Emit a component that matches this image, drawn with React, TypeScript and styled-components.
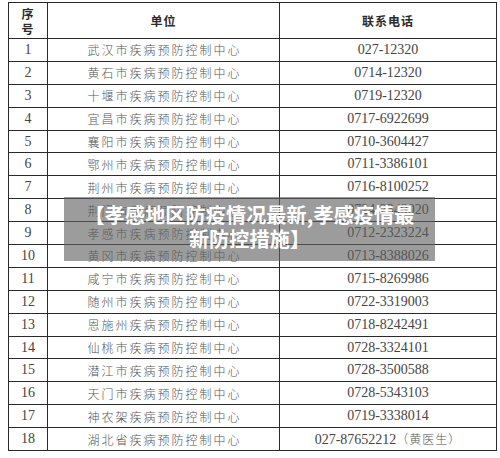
import React from "react";
import styled, { createGlobalStyle } from "styled-components";

const Global = createGlobalStyle`
  html, body { margin: 0; padding: 0; background: #fff; }
  body { width: 500px; height: 458px; overflow: hidden; }
`;

const Page = styled.div`
  position: relative;
  width: 500px;
  height: 458px;
  padding: 2px 0 0 8px;
  box-sizing: border-box;
`;

const Table = styled.table`
  border-collapse: collapse;
  width: 488px;
  table-layout: fixed;
  border: 1.5px solid #333;
`;

const HeadCell = styled.th`
  height: 35px;
  border: 1px solid #2a2a2a;
  font-family: "Noto Sans CJK SC", sans-serif;
  font-weight: 700;
  font-size: 12px;
  line-height: 15px;
  color: #2b2b2b;
  letter-spacing: 1px;
  text-align: center;
  padding: 0;
`;

const Row = styled.tr`
  height: 22.9px;
`;

const NumCell = styled.td`
  border: 1px solid #2a2a2a;
  font-family: "Liberation Serif", serif;
  font-size: 14px;
  color: #444;
  text-align: center;
  padding: 0;
`;

const UnitCell = styled.td`
  border: 1px solid #2a2a2a;
  font-family: "Noto Sans CJK SC", sans-serif;
  font-weight: 300;
  font-size: 12px;
  letter-spacing: 2px;
  color: #555;
  text-align: center;
  padding: 0 0 0 2px;
`;

const PhoneCell = styled.td`
  border: 1px solid #2a2a2a;
  font-family: "Liberation Serif", serif;
  font-size: 14px;
  color: #444;
  text-align: center;
  padding: 0;
`;

const Note = styled.span`
  font-family: "Noto Sans CJK SC", sans-serif;
  font-weight: 300;
  font-size: 12px;
  letter-spacing: 1px;
  color: #555;
`;

const Banner = styled.div`
  position: absolute;
  left: 64px;
  top: 197px;
  width: 371px;
  height: 64px;
  box-sizing: border-box;
  padding: 6px 8px;
  background: rgba(95, 95, 95, 0.62);
  color: #fff;
  font-family: "Noto Sans CJK SC", sans-serif;
  font-weight: 700;
  font-size: 20px;
  line-height: 24px;
  text-align: center;
  letter-spacing: 0.2px;
  white-space: nowrap;
`;

const rows: [string, string, string?][] = [
  ["武汉市疾病预防控制中心", "027-12320"],
  ["黄石市疾病预防控制中心", "0714-12320"],
  ["十堰市疾病预防控制中心", "0719-12320"],
  ["宜昌市疾病预防控制中心", "0717-6922699"],
  ["襄阳市疾病预防控制中心", "0710-3604427"],
  ["鄂州市疾病预防控制中心", "0711-3386101"],
  ["荆州市疾病预防控制中心", "0716-8100252"],
  ["荆门市疾病预防控制中心", "0724-2349020"],
  ["孝感市疾病预防控制中心", "0712-2323224"],
  ["黄冈市疾病预防控制中心", "0713-8388026"],
  ["咸宁市疾病预防控制中心", "0715-8269986"],
  ["随州市疾病预防控制中心", "0722-3319003"],
  ["恩施州疾病预防控制中心", "0718-8242491"],
  ["仙桃市疾病预防控制中心", "0728-3324101"],
  ["潜江市疾病预防控制中心", "0728-3500588"],
  ["天门市疾病预防控制中心", "0728-5343103"],
  ["神农架疾病预防控制中心", "0719-3338014"],
  ["湖北省疾病预防控制中心", "027-87652212", "（黄医生）"],
];

export default function App() {
  return (
    <>
      <Global />
      <Page>
        <Table>
          <colgroup>
            <col style={{ width: 39 }} />
            <col style={{ width: 232 }} />
            <col style={{ width: 217 }} />
          </colgroup>
          <thead>
            <tr>
              <HeadCell>
                序<br />号
              </HeadCell>
              <HeadCell>单位</HeadCell>
              <HeadCell>联系电话</HeadCell>
            </tr>
          </thead>
          <tbody>
            {rows.map(([unit, phone, note], i) => (
              <Row key={i}>
                <NumCell>{i + 1}</NumCell>
                <UnitCell>{unit}</UnitCell>
                <PhoneCell>
                  {phone}
                  {note && <Note>{note}</Note>}
                </PhoneCell>
              </Row>
            ))}
          </tbody>
        </Table>
        <Banner>
          【孝感地区防疫情况最新,孝感疫情最
          <br />
          新防控措施】
        </Banner>
      </Page>
    </>
  );
}
